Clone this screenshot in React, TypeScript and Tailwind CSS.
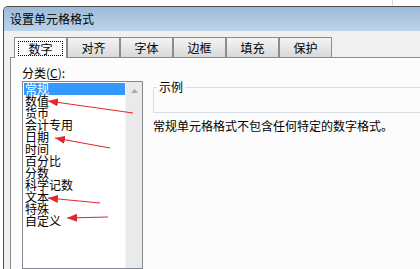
import React from "react";

const tabs = ["数字", "对齐", "字体", "边框", "填充", "保护"];
const categories = [
  "常规",
  "数值",
  "货币",
  "会计专用",
  "日期",
  "时间",
  "百分比",
  "分数",
  "科学记数",
  "文本",
  "特殊",
  "自定义",
];

// red annotation arrows: [fromX, fromY, tipX, tipY]
const arrows: [number, number, number, number][] = [
  [133, 113, 48, 101],
  [110, 148, 55, 138],
  [100, 203, 48, 198],
  [108, 217, 67, 218],
];

const Tab = ({ label, active }: { label: string; active: boolean }) => {
  if (active) {
    return (
      <div className="relative z-10 -mb-px flex h-[21px] w-[53px] items-center justify-center border border-b-0 border-[#898c95] bg-[#fcfcfc]">
        <span className="border border-dotted border-black px-[9px] text-[12px] leading-[13px]">
          {label}
        </span>
      </div>
    );
  }
  return (
    <div className="flex h-[20px] w-[53px] items-center justify-center border border-b-0 border-[#898c95] bg-linear-to-b from-[#f4f4f4] to-[#d9d9d9] text-[12px] leading-[14px]">
      {label}
    </div>
  );
};

export default function App() {
  return (
    <div className="relative flex h-[269px] w-[420px] flex-col overflow-hidden bg-white font-['Noto_Sans_CJK_SC',sans-serif] text-black">
      {/* spreadsheet behind the dialog */}
      <div className="flex h-[6px] shrink-0">
        <div className="w-[393px] border-r border-[#d6d6d6]" />
      </div>

      <div className="flex flex-1 pl-[3px]">
        {/* Dialog window */}
        <div className="flex flex-1 flex-col rounded-tl-[5px] border-l border-t border-[#4d4d4d] bg-[#f0f0f0]">
          {/* Title bar */}
          <div className="h-[24px] shrink-0 rounded-tl-[4px] bg-linear-to-b from-[#9cbad8] to-[#bcd4ea] pl-[6px] text-[12px] leading-[24px]">
            设置单元格格式
          </div>

          {/* Tabs */}
          <div className="flex items-end pl-[10px] pt-[6px]">
            {tabs.map((t, i) => (
              <Tab key={t} label={t} active={i === 0} />
            ))}
          </div>

          {/* Tab panel */}
          <div className="ml-[6px] flex flex-1 border-l border-t border-[#898c95] bg-[#fcfcfc] pl-[11px] pt-[8px]">
            {/* Category column */}
            <div className="flex w-[121px] flex-col">
              <div className="h-[14px] text-[12px] leading-[14px]">
                分类(<span className="underline">C</span>):
              </div>
              <div className="mt-px flex flex-1 border border-[#828790] bg-white">
                <div className="flex-1 pl-px pt-px">
                  {categories.map((c, i) => (
                    <div
                      key={c}
                      className={`h-[12px] pl-px text-[12px] leading-[12px] ${
                        i === 0 ? "bg-[#3399ff] text-white" : ""
                      }`}
                    >
                      {c}
                    </div>
                  ))}
                </div>
                {/* scrollbar */}
                <div className="flex w-[17px] flex-col border-l border-[#f4f4f4] bg-[#eaeaea]">
                  <div className="flex h-[17px] items-center justify-center">
                    <svg width="7" height="4" viewBox="0 0 7 4">
                      <path d="M0 4 L3.5 0 L7 4 Z" fill="#a8a8a8" />
                    </svg>
                  </div>
                </div>
              </div>
            </div>

            {/* Sample + description */}
            <div className="ml-[10px] flex flex-1 flex-col pt-[15px]">
              <fieldset className="h-[32px] border border-r-0 border-[#d5dfe5]">
                <legend className="ml-[3px] px-[2px] text-[12px] leading-[12px]">
                  示例
                </legend>
              </fieldset>
              <div className="mt-[6px] whitespace-nowrap text-[12px] leading-[14px]">
                常规单元格格式不包含任何特定的数字格式。
              </div>
            </div>
          </div>
        </div>
      </div>

      {/* Red annotation arrows */}
      <svg
        className="pointer-events-none absolute left-0 top-0"
        width="420"
        height="269"
        viewBox="0 0 420 269"
      >
        <defs>
          <marker
            id="head"
            viewBox="0 0 10 8"
            refX="10"
            refY="4"
            markerWidth="10"
            markerHeight="8"
            markerUnits="userSpaceOnUse"
            orient="auto"
          >
            <path d="M0 0 L10 4 L0 8 Z" fill="#e3262c" />
          </marker>
        </defs>
        {arrows.map(([x1, y1, x2, y2], i) => (
          <line
            key={i}
            x1={x1}
            y1={y1}
            x2={x2}
            y2={y2}
            stroke="#e3262c"
            strokeWidth="1.2"
            markerEnd="url(#head)"
          />
        ))}
      </svg>
    </div>
  );
}
